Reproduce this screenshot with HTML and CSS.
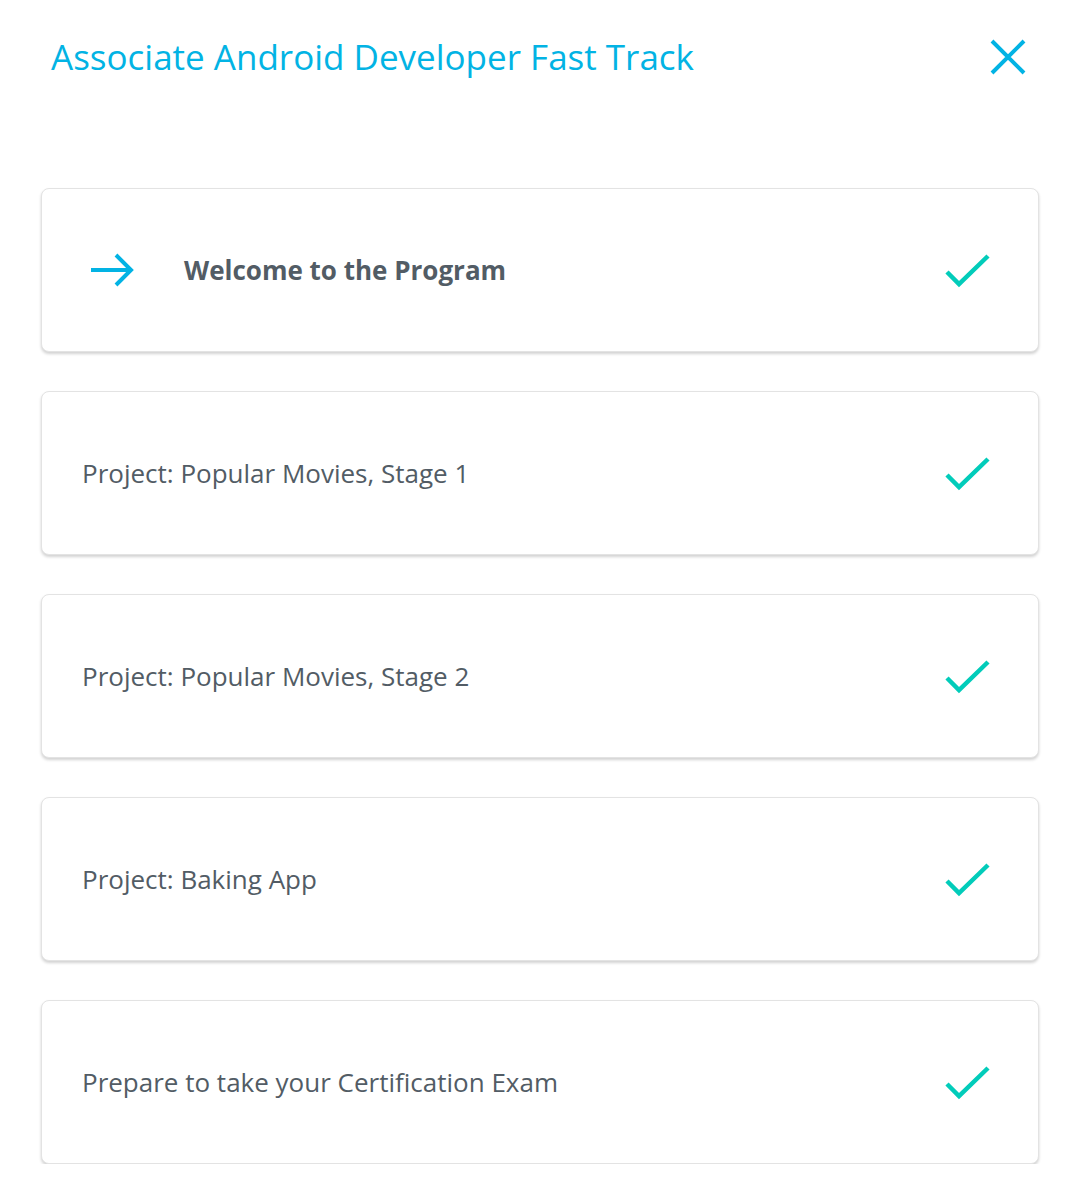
FILE: index.html
```html
<!DOCTYPE html>
<html>
<head>
<meta charset="utf-8">
<link rel="stylesheet" href="styles.css">
</head>
<body>
<div class="page">
  <header class="header">
    <h1 class="title">Associate Android Developer Fast Track</h1>
    <svg class="close" width="36" height="36" viewBox="0 0 36 36">
      <path d="M2 2 L34 34 M34 2 L2 34" stroke="#02b3e4" stroke-width="4" fill="none"/>
    </svg>
  </header>
  <ul class="list">
    <li class="card current">
      <svg class="arrow" width="46" height="44" viewBox="0 0 46 44">
        <path d="M2 22 H41 M27 7 L42 22 L27 37" stroke="#02b3e4" stroke-width="4" fill="none"/>
      </svg>
      <span class="label">Welcome to the Program</span>
      <svg class="check" width="48" height="40" viewBox="0 0 48 40">
        <path d="M4 22 L16 34 L45 6" stroke="#02ccba" stroke-width="4.5" fill="none"/>
      </svg>
    </li>
    <li class="card">
      <span class="label">Project: Popular Movies, Stage 1</span>
      <svg class="check" width="48" height="40" viewBox="0 0 48 40">
        <path d="M4 22 L16 34 L45 6" stroke="#02ccba" stroke-width="4.5" fill="none"/>
      </svg>
    </li>
    <li class="card">
      <span class="label">Project: Popular Movies, Stage 2</span>
      <svg class="check" width="48" height="40" viewBox="0 0 48 40">
        <path d="M4 22 L16 34 L45 6" stroke="#02ccba" stroke-width="4.5" fill="none"/>
      </svg>
    </li>
    <li class="card">
      <span class="label">Project: Baking App</span>
      <svg class="check" width="48" height="40" viewBox="0 0 48 40">
        <path d="M4 22 L16 34 L45 6" stroke="#02ccba" stroke-width="4.5" fill="none"/>
      </svg>
    </li>
    <li class="card">
      <span class="label">Prepare to take your Certification Exam</span>
      <svg class="check" width="48" height="40" viewBox="0 0 48 40">
        <path d="M4 22 L16 34 L45 6" stroke="#02ccba" stroke-width="4.5" fill="none"/>
      </svg>
    </li>
  </ul>
</div>
</body>
</html>
```
FILE: styles.css
```css
html, body {
  margin: 0;
  padding: 0;
  background: #ffffff;
}
body {
  font-family: "Open Sans", "Noto Sans", sans-serif;
  color: #525c65;
}
.page {
  padding: 0 41px 0 41px;
}
.header {
  display: flex;
  align-items: center;
  justify-content: space-between;
  padding: 35px 13px 0 10px;
  height: 44px;
}
.title {
  margin: 0;
  font-size: 35px;
  line-height: 44px;
  font-weight: 400;
  color: #02b3e4;
}
.close {
  display: block;
}
.list {
  list-style: none;
  margin: 109px 0 0 0;
  padding: 0;
  display: flex;
  flex-direction: column;
  gap: 39px;
}
.card {
  display: flex;
  align-items: center;
  height: 162px;
  padding: 0 47px 0 40px;
  background: #fff;
  border: 1px solid #e3e3e3;
  border-radius: 8px;
  box-shadow: 0 2px 3px rgba(0, 0, 0, 0.18);
}
.label {
  flex: 1;
  font-size: 26px;
  line-height: 34px;
}
.current .label {
  font-weight: 700;
}
.arrow {
  display: block;
  margin: 0 49px 0 7px;
}
.check {
  display: block;
}
```
